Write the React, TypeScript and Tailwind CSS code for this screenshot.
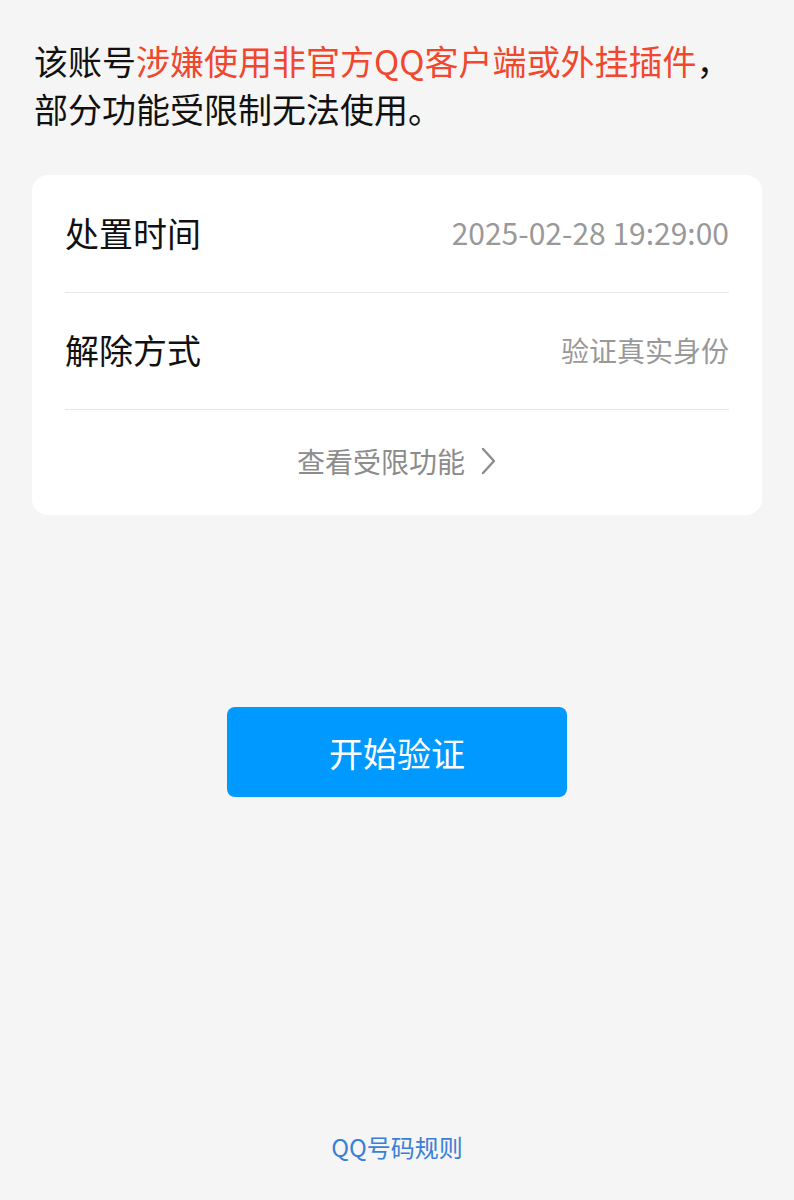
import React from "react";

const font = { fontFamily: '"Noto Sans CJK SC", "Noto Sans", sans-serif' };

export default function App() {
  return (
    <div
      className="w-[794px] h-[1200px] bg-[#f5f5f5] flex flex-col"
      style={font}
    >
      <div className="pt-[37px] px-[34px] text-[34px] leading-[48px] text-[#111111]">
        该账号<span className="text-[#f0472e]">涉嫌使用非官方QQ客户端或外挂插件</span>，
        <br />
        部分功能受限制无法使用。
      </div>

      <div className="mx-[32px] mt-[42px] bg-white rounded-[16px] px-[33px]">
        <div className="h-[118px] pb-[3px] flex items-center justify-between border-b border-[#e6e6e6]">
          <span className="text-[34px] text-[#111111]">处置时间</span>
          <span className="text-[30px] text-[#999999]">2025-02-28 19:29:00</span>
        </div>
        <div className="h-[117px] pb-[3px] flex items-center justify-between border-b border-[#e6e6e6]">
          <span className="text-[34px] text-[#111111]">解除方式</span>
          <span className="text-[28px] text-[#999999]">验证真实身份</span>
        </div>
        <div className="h-[105px] pb-[3px] flex items-center justify-center gap-[14px]">
          <span className="text-[28px] text-[#8c8c8c]">查看受限功能</span>
          <svg width="18" height="30" viewBox="0 0 18 30" fill="none">
            <path d="M4 3 L15 15 L4 27" stroke="#8c8c8c" strokeWidth="2.4" strokeLinecap="round" strokeLinejoin="round" />
          </svg>
        </div>
      </div>

      <div className="flex justify-center mt-[192px]">
        <button className="w-[340px] h-[90px] rounded-[8px] bg-[#0099ff] text-white text-[34px]">
          开始验证
        </button>
      </div>

      <div className="flex-1" />
      <div className="flex justify-center pb-[35px]">
        <span className="text-[24px] text-[#3a7fd6]">QQ号码规则</span>
      </div>
    </div>
  );
}
